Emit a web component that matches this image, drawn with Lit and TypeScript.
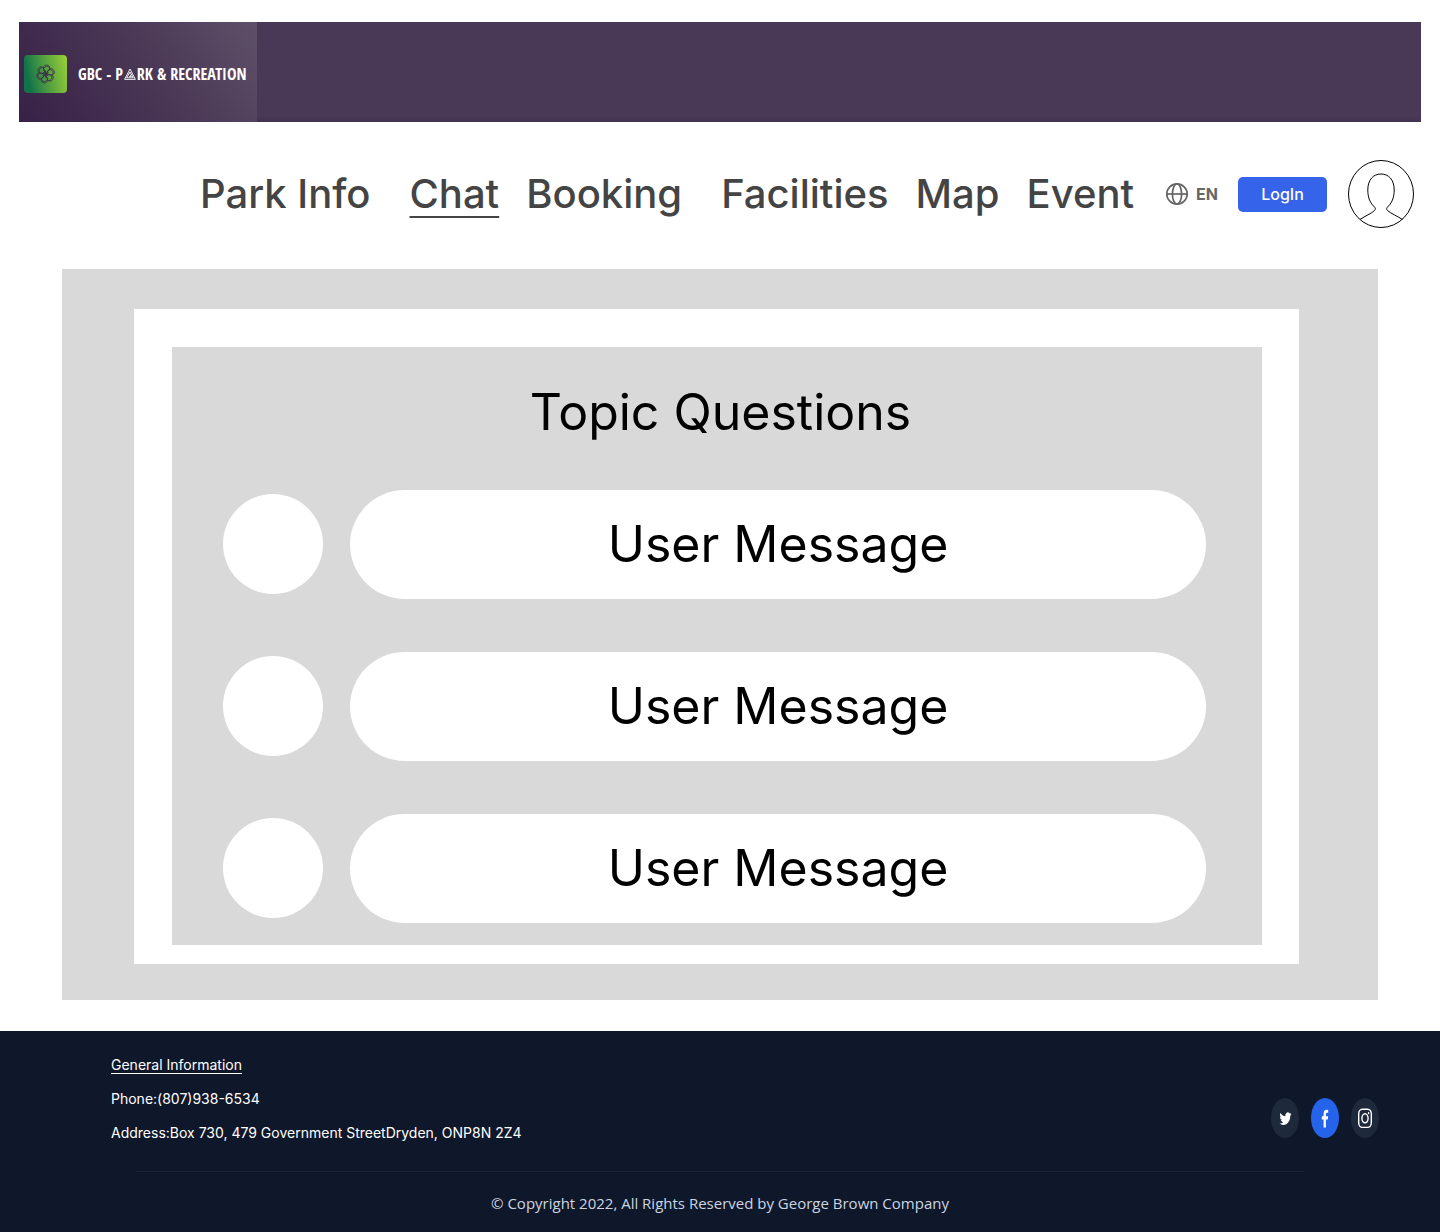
import { LitElement, html, css, svg } from "lit";
import { customElement } from "lit/decorators.js";
import { classMap } from "lit/directives/class-map.js";

const base = css`
  :host {
    display: block;
    font-family: Inter, "Liberation Sans", sans-serif;
    font-optical-sizing: none;
  }
  * {
    box-sizing: border-box;
  }
  a {
    color: inherit;
    text-decoration: none;
  }
`;

@customElement("brand-bar")
class BrandBar extends LitElement {
  static styles = [
    base,
    css`
      .bar {
        display: flex;
        height: 100px;
        background: linear-gradient(#4a3956 93%, #43324f);
      }
      .brand {
        display: flex;
        align-items: center;
        width: 238px;
        padding: 3px 0 0 5px;
        gap: 11px;
        background: linear-gradient(55deg, #382147, #4a3856 55%, #5f5068);
        color: #fff;
      }
      .mark {
        display: block;
        width: 43px;
        height: 38px;
        flex: none;
      }
      .name {
        display: flex;
        align-items: center;
        white-space: pre;
        font: 700 16px/20px "Liberation Sans Narrow", "Open Sans Condensed", "Roboto Condensed", "DejaVu Sans Condensed", sans-serif;
      }
      .tri {
        width: 12px;
        height: 12px;
        margin: 0 1px;
      }
    `,
  ];
  render() {
    return html`
      <div class="bar">
        <a class="brand" href="#" aria-label="GBC - Park &amp; Recreation">
          <svg class="mark" viewBox="0 0 43 38" aria-hidden="true">
            <defs>
              <linearGradient id="leaf" x1="0" y1="0.2" x2="1" y2="0">
                <stop offset="0" stop-color="#11734a" />
                <stop offset="0.5" stop-color="#5aa540" />
                <stop offset="1" stop-color="#9ad036" />
              </linearGradient>
            </defs>
            <rect width="43" height="38" rx="4" fill="url(#leaf)" />
            <g fill="none" stroke="#3d2a4c" stroke-width="0.8">
              ${[10, 70, 130, 190, 250, 310].map(
                (a) => svg`<g transform="rotate(${a} 21.5 19)">
                  <path d="M20.500 17 C17.500 14.500 17.500 10.500 21 10 C25 9.800 26 13 22.500 17" />
                  <path d="M18.800 14 C19.500 11 23 10.500 24.500 12.500" />
                  <path d="M21.500 19 L21 15.500" />
                </g>`
              )}
              <circle cx="21.5" cy="19" r="2" />
            </g>
          </svg>
          <span class="name"><span>GBC - P</span><svg class="tri" viewBox="0 0 12 12" aria-hidden="true">
              <g fill="none" stroke="#fff" stroke-width="0.9">
                <path d="M6 1 L11.4 11.4 H0.6 Z" />
                <path d="M6 4 L9.4 9.8 H2.6 Z" />
                <path d="M6 6.6 L7.4 8.6 H5" />
              </g></svg><span>RK &amp; RECREATION</span></span>
        </a>
      </div>
    `;
  }
}

@customElement("main-nav")
class MainNav extends LitElement {
  static styles = [
    base,
    css`
      .nav {
        display: flex;
        align-items: center;
        justify-content: flex-end;
        padding: 38px 26px 0 19px;
        color: #444;
      }
      .links {
        display: flex;
        gap: 27px;
        margin: 0 31px 0 0;
        padding: 0;
        list-style: none;
        font-size: 40px;
        font-weight: 500;
        line-height: 50px;
        white-space: nowrap;
      }
      .spaced {
        margin-right: 12px;
      }
      .current {
        text-decoration: underline;
        text-decoration-thickness: 2px;
        text-underline-offset: 8px;
        text-decoration-skip-ink: none;
      }
      button {
        font-family: inherit;
        border: 0;
        cursor: pointer;
      }
      .lang {
        display: flex;
        align-items: center;
        gap: 7px;
        padding: 0;
        margin-right: 20px;
        background: none;
        color: #666;
        font-size: 16px;
        font-weight: 700;
        line-height: 20px;
      }
      .globe {
        width: 24px;
        height: 24px;
      }
      .login {
        width: 89px;
        height: 35px;
        padding: 0;
        margin-right: 21px;
        border-radius: 5px;
        background: #3563e9;
        color: #fff;
        font-size: 16px;
        font-weight: 500;
        line-height: 20px;
      }
      .user {
        display: block;
      }
      .avatar {
        display: block;
        width: 66px;
        height: 68px;
      }
    `,
  ];
  items = [
    { text: "Park Info", spaced: true },
    { text: "Chat", current: true },
    { text: "Booking", spaced: true },
    { text: "Facilities" },
    { text: "Map" },
    { text: "Event" },
  ];
  render() {
    return html`
      <nav class="nav">
        <ul class="links">
          ${this.items.map(
            (i) => html`<li class=${classMap({ spaced: !!i.spaced })}>
              <a class=${classMap({ current: !!i.current })} href="#">${i.text}</a>
            </li>`
          )}
        </ul>
        <button class="lang" type="button">
          <svg class="globe" viewBox="0 0 24 24" fill="none" stroke="#666" stroke-width="1.7" aria-hidden="true">
            <circle cx="12" cy="12" r="10.200" />
            <ellipse cx="12" cy="12" rx="4.6" ry="10.200" />
            <path d="M2 12 H22" />
          </svg>
          <span>EN</span>
        </button>
        <button class="login" type="button">LogIn</button>
        <a class="user" href="#" aria-label="Account">
          <svg class="avatar" viewBox="0 0 66 68" fill="none" stroke="#000" stroke-width="1" aria-hidden="true">
            <ellipse cx="33" cy="34" rx="32.5" ry="33.5" />
            <path d="M12 59.5 C17 56 23.500 53.500 26.500 50.500 C28 49 27.500 48 25.500 46 C21.500 42 19.800 36.500 19.800 30 C19.800 19.500 25.500 14 33 14 C40.500 14 46.200 19.500 46.200 30 C46.200 36.500 44.500 42 40.500 46 C38.500 48 38 49 39.500 50.500 C43 53.500 49 56 54.500 59.500" />
          </svg>
        </a>
      </nav>
    `;
  }
}

@customElement("chat-board")
class ChatBoard extends LitElement {
  static styles = [
    base,
    css`
      .outer {
        margin: 41px 62px 31px;
        padding: 40px 79px 36px 72px;
        background: #d9d9d9;
      }
      .frame {
        padding: 38px 37px 19px 38px;
        background: #fff;
      }
      .board {
        padding: 35px 56px 22px 51px;
        background: #d9d9d9;
        color: #000;
      }
      .title {
        margin: 0 0 48px;
        padding-left: 12px;
        font-size: 50px;
        font-weight: 400;
        line-height: 60px;
        text-align: center;
      }
      .list {
        display: grid;
        gap: 53px;
        margin: 0;
        padding: 0;
        list-style: none;
      }
      .row {
        display: flex;
        align-items: flex-start;
        gap: 27px;
      }
      .face {
        flex: none;
        width: 100px;
        height: 100px;
        margin-top: 4px;
        border-radius: 50%;
        background: #fff;
      }
      .message {
        flex: 1;
        margin: 0;
        padding: 24px;
        border-radius: 55px;
        background: #fff;
        font-size: 50px;
        line-height: 61px;
        text-align: center;
      }
    `,
  ];
  messages = ["User Message", "User Message", "User Message"];
  render() {
    return html`
      <main class="outer">
        <div class="frame">
          <section class="board">
            <h1 class="title">Topic Questions</h1>
            <ul class="list">
              ${this.messages.map(
                (m) => html`<li class="row"><span class="face"></span><p class="message">${m}</p></li>`
              )}
            </ul>
          </section>
        </div>
      </main>
    `;
  }
}

@customElement("site-footer")
class SiteFooter extends LitElement {
  static styles = [
    base,
    css`
      .footer {
        padding: 24px 61px 19px 111px;
        background: #0f172a;
        color: #fff;
      }
      .top {
        display: flex;
        justify-content: space-between;
        align-items: flex-end;
        padding-bottom: 28px;
      }
      .info {
        display: grid;
        gap: 14px;
        font-size: 14px;
        line-height: 20px;
        font-style: normal;
      }
      .info p {
        margin: 0;
      }
      .heading {
        text-decoration: underline;
        text-underline-offset: 3px;
        text-decoration-skip-ink: none;
      }
      .social {
        display: flex;
        gap: 12px;
        padding-bottom: 5px;
      }
      .link,
      .icon {
        display: block;
        width: 28px;
        height: 40px;
      }
      .link {
        border-radius: 50%;
        background: #1e293b;
      }
      .active {
        background: #2563eb;
      }
      .rule {
        height: 1px;
        margin: 0 75px 0 25px;
        border: 0;
        background: #1b2538;
      }
      .copy {
        margin: 21px 0 0;
        padding-right: 50px;
        color: #cbd5e1;
        font-family: "Open Sans", Inter, sans-serif;
        font-size: 15px;
        line-height: 20px;
        text-align: center;
      }
    `,
  ];
  render() {
    return html`
      <footer class="footer">
        <div class="top">
          <address class="info">
            <p><a class="heading" href="#">General Information</a></p>
            <p>Phone:(807)938-6534</p>
            <p>Address:Box 730, 479 Government StreetDryden, ONP8N 2Z4</p>
          </address>
          <div class="social">
            <a class="link" href="#" aria-label="Twitter">
              <svg class="icon" viewBox="0 0 28 40" aria-hidden="true">
                <path
                  transform="translate(8.500 13) scale(0.5 0.64)"
                  fill="#fff"
                  d="M23.950 4.570a10 10 0 0 1-2.820.770 4.960 4.960 0 0 0 2.160-2.720c-.950.550-2 .950-3.130 1.180a4.920 4.920 0 0 0-8.380 4.480C7.690 8.090 4.070 6.130 1.640 3.160a4.820 4.820 0 0 0-.670 2.480c0 1.710.870 3.210 2.190 4.100a4.900 4.900 0 0 1-2.230-.620v.060a4.920 4.920 0 0 0 3.950 4.830 5 5 0 0 1-2.210.080 4.940 4.940 0 0 0 4.600 3.420A9.870 9.870 0 0 1 0 19.540a13.990 13.990 0 0 0 7.550 2.210c9.050 0 14-7.500 14-13.980 0-.210 0-.420-.020-.630A9.940 9.940 0 0 0 24 4.590z"
                />
              </svg>
            </a>
            <a class="link active" href="#" aria-label="Facebook">
              <svg class="icon" viewBox="0 0 28 40" aria-hidden="true">
                <path
                  fill="#fff"
                  d="M12.600 29.500 V21.400 H10.800 V18.200 H12.600 V16 C12.600 13.200 13.700 11.800 15.600 11.800 C16.300 11.800 16.900 11.900 17.200 12 V14.700 H16.200 C15.200 14.700 14.900 15.400 14.900 16.400 V18.200 H17.100 L16.800 21.400 H14.900 V29.500 Z"
                />
              </svg>
            </a>
            <a class="link" href="#" aria-label="Instagram">
              <svg class="icon" viewBox="0 0 28 40" fill="none" stroke="#fff" stroke-width="1.400" aria-hidden="true">
                <rect x="7.700" y="11.200" width="12.600" height="18.200" rx="3.600" ry="4.600" />
                <ellipse cx="14" cy="20.300" rx="3.100" ry="4.500" />
                <ellipse cx="17.600" cy="15.200" rx="0.800" ry="1.100" fill="#fff" stroke="none" />
              </svg>
            </a>
          </div>
        </div>
        <hr class="rule" />
        <p class="copy">© Copyright 2022, All Rights Reserved by George Brown Company</p>
      </footer>
    `;
  }
}

@customElement("app-root")
class AppRoot extends LitElement {
  static styles = [
    base,
    css`
      :host {
        background: #fff;
      }
      .page {
        display: flow-root;
      }
      .brand-area {
        display: block;
        margin: 22px 19px 0;
      }
    `,
  ];
  render() {
    return html`
      <div class="page">
        <brand-bar class="brand-area"></brand-bar>
        <main-nav></main-nav>
        <chat-board></chat-board>
        <site-footer></site-footer>
      </div>
    `;
  }
}
